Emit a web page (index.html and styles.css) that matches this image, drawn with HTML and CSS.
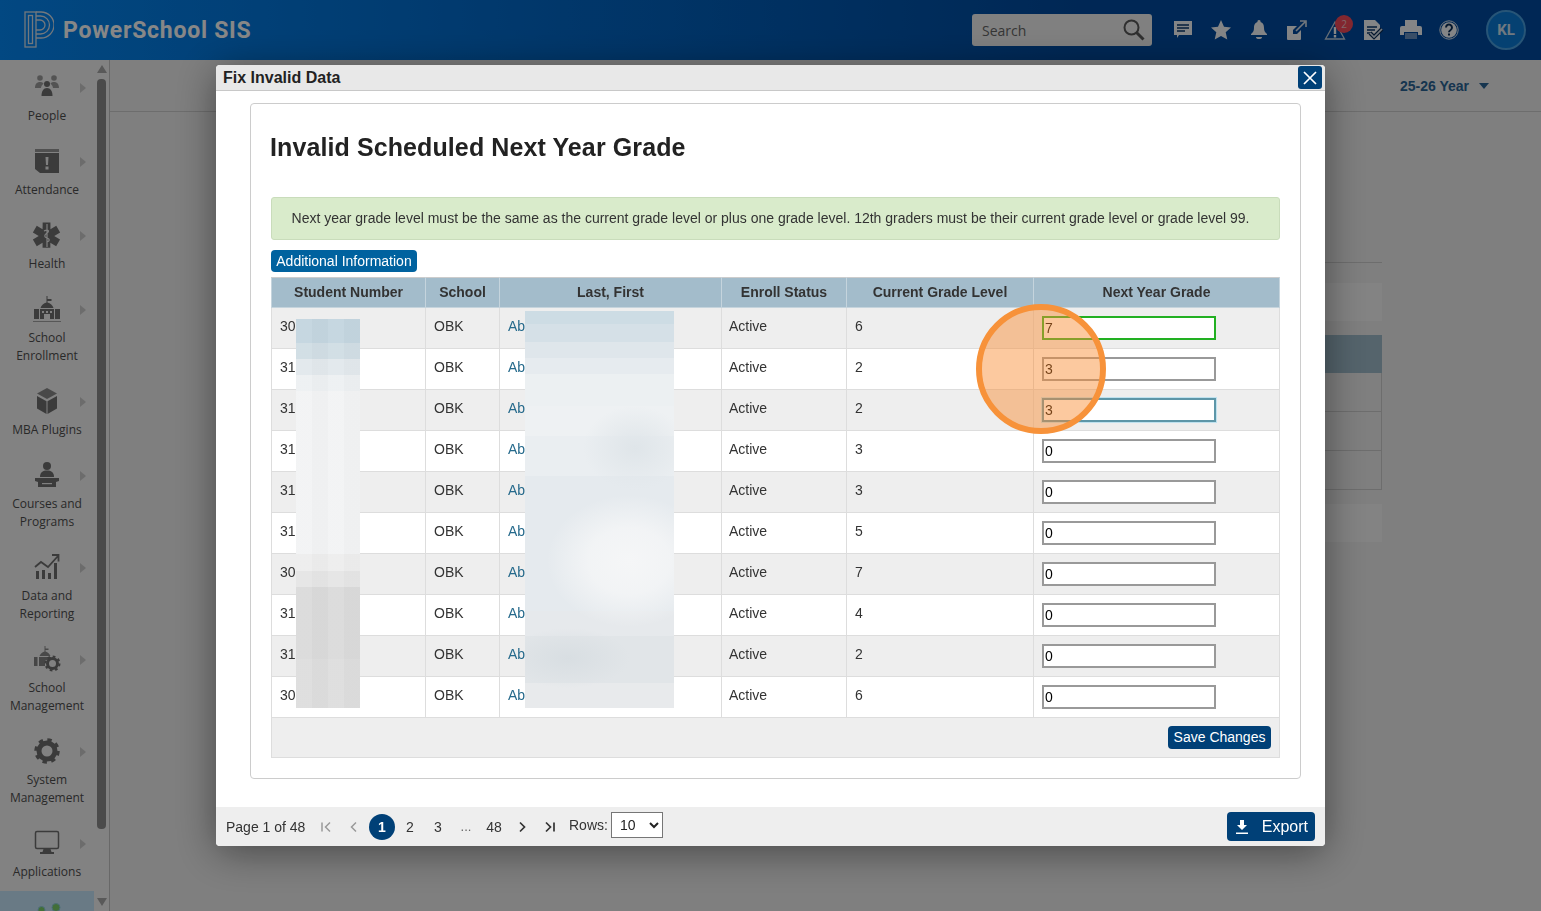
FILE: index.html
```html
<!DOCTYPE html>
<html lang="en">
<head>
<meta charset="utf-8">
<title>PowerSchool SIS - Fix Invalid Data</title>
<link rel="stylesheet" href="styles.css">
</head>
<body>
<div class="app">
  <header class="topbar">
    <div class="brand">
      <svg class="logo" width="30" height="38" viewBox="0 0 30 38" fill="none" stroke="currentColor" stroke-width="1.3">
        <rect x="1" y="1" width="11" height="35"/>
        <rect x="4.5" y="4.5" width="4" height="28"/>
        <path d="M12 1h5a13 13 0 0 1 0 26h-5"/>
        <path d="M12 5h4.500a9 9 0 0 1 0 18h-4.500"/>
        <path d="M12 9h4a5 5 0 0 1 0 10h-4"/>
      </svg>
      <span class="brand-name">PowerSchool SIS</span>
    </div>
    <div class="search">
      <span class="search-text">Search</span>
      <svg width="24" height="24" viewBox="0 0 24 24" fill="none" stroke="#5a5a5a" stroke-width="2"><circle cx="9.500" cy="9.500" r="7"/><path d="M14.500 14.500l7 7" stroke-width="3"/></svg>
    </div>
    <nav class="tools">
      <span class="tool"><svg width="20" height="20" viewBox="0 0 20 20"><path class="fill-light" d="M1 1h18v14H6l-2 3v-3H1z"/><path d="M4 5h12M4 8h12M4 11h8" stroke="#0a3a6e" stroke-width="1.500"/></svg></span>
      <span class="tool"><svg width="22" height="22" viewBox="0 0 22 22"><path class="fill-light" d="M11 1l3 6.800 7 .7-5.300 4.700 1.600 7.300L11 16.900 4.700 20.500l1.600-7.300L1 8.500l7-.7z"/></svg></span>
      <span class="tool"><svg width="20" height="22" viewBox="0 0 20 22"><path class="fill-light" d="M10 1a1.500 1.500 0 0 1 1.500 2c3 1 3.500 3.500 3.500 6 0 3 1 4.500 3 6v1H2v-1c2-1.500 3-3 3-6 0-2.500.5-5 3.500-6A1.500 1.500 0 0 1 10 1z"/><path class="fill-light" d="M7 18h6a3 2 0 0 1-6 0z"/></svg></span>
      <span class="tool"><svg width="22" height="22" viewBox="0 0 22 22"><path class="fill-light" d="M1 7h10L7 11v4h4l4-4v9a1 1 0 0 1-1 1H2a1 1 0 0 1-1-1z"/><path d="M10 12l9-9M14 2h6v6" fill="none" stroke="#d9e2ec" stroke-width="1.600"/></svg></span>
      <span class="tool tool-alert">
        <svg width="22" height="22" viewBox="0 0 22 22"><path d="M11 3L1.500 20h19z" fill="none" stroke="#c4d2e0" stroke-width="1.300"/><path class="fill-light" d="M9.800 8h2.400v7H9.800zM9.800 16h2.400v2.400H9.800z"/></svg>
        <span class="badge">2</span>
      </span>
      <span class="tool"><svg width="22" height="22" viewBox="0 0 22 22"><path class="fill-light" d="M2 1h11l5 5v15H2z"/><path d="M5 8h10M5 11h8M5 14h4" stroke="#0a3a6e" stroke-width="1.500"/><path d="M8 14l4 4 8-8" fill="none" stroke="#0a2f5a" stroke-width="4"/><path d="M8 14l4 4 8-8" fill="none" stroke="#d9e2ec" stroke-width="1.700"/></svg></span>
      <span class="tool"><svg width="22" height="20" viewBox="0 0 22 20"><path class="fill-light" d="M5 0h12v6H5z"/><path class="fill-light" d="M2 6h18a2 2 0 0 1 2 2v7h-4v-3H4v3H0V8a2 2 0 0 1 2-2z"/><path d="M5 13h12v6H5z" fill="#c4d2e0" opacity=".55"/></svg></span>
      <span class="tool"><svg width="20" height="20" viewBox="0 0 20 20"><circle cx="10" cy="10" r="9.200" fill="none" stroke="#d9e2ec" stroke-width="1"/><circle class="fill-light" cx="10" cy="10" r="7.800"/><path d="M7 7.500a3 3 0 1 1 4.600 2.500c-1 .6-1.600 1.200-1.600 2.300" fill="none" stroke="#0a2f5a" stroke-width="2"/><rect x="9" y="13.500" width="2" height="2" fill="#0a2f5a"/></svg></span>
    </nav>
    <div class="avatar">KL</div>
  </header>

  <div class="workspace">
    <aside class="sidebar">
      <ul class="menu">
        <li class="menu-item">
          <div class="menu-icon"><svg width="30" height="30" viewBox="0 0 30 30" fill="currentColor"><g opacity=".65"><circle cx="8" cy="6" r="2.800"/><circle cx="22" cy="6" r="2.800"/><path d="M3 16c0-4 2-6 5-6 1.500 0 3 .5 3.500 1.500C10 13 9 14.500 9 16zM27 16c0-4-2-6-5-6-1.500 0-3 .5-3.500 1.500 1.500 1.500 2.500 3 2.500 4.500z"/></g><circle cx="15" cy="12" r="3"/><path d="M9.500 24c0-5 2-8 5.500-8s5.500 3 5.500 8z"/></svg></div>
          <span class="menu-arrow"></span>
          <span class="menu-label">People</span>
        </li>
        <li class="menu-item">
          <div class="menu-icon"><svg width="30" height="30" viewBox="0 0 30 30" fill="currentColor"><path d="M3 3h24v3H3z" opacity=".7"/><path d="M3 7h24v20H8l-5-4z"/><path d="M13.500 11h3l-.5 8h-2zM13.500 20.500h3v3h-3z" fill="#f2f2f2"/></svg></div>
          <span class="menu-arrow"></span>
          <span class="menu-label">Attendance</span>
        </li>
        <li class="menu-item">
          <div class="menu-icon"><svg width="30" height="30" viewBox="0 0 30 30" fill="currentColor"><path d="M11 3h8v7l6-3.500 4 7-6 3.500-.1 0 6 3.500-4 7-6-3.500v5h-8v-5l-6 3.500-4-7 6-3.500-6-3.500 4-7 6 3.500z" transform="translate(0 -.5) scale(.97)"/><path d="M15 4v23M12 11c4-2 6 0 3 2s-3 4 0 5 3 3 0 4" fill="none" stroke="#f2f2f2" stroke-width="1.200"/></svg></div>
          <span class="menu-arrow"></span>
          <span class="menu-label">Health</span>
        </li>
        <li class="menu-item">
          <div class="menu-icon"><svg width="30" height="30" viewBox="0 0 30 30" fill="currentColor"><path d="M14.500 2h1v3h4v2h-4v1.500c3 .8 5 2.800 6 5.500h-13c1-2.700 3-4.700 6-5.500z"/><path d="M2 15h5v10H2zM23 15h5v10h-5z"/><path d="M8 15h14v10h-4v-5h-6v5H8z"/><path d="M10 17h2v2h-2zM14 17h2v2h-2zM18 17h2v2h-2z" fill="#f2f2f2"/><path d="M1 27h28v1H1z" opacity=".6"/></svg></div>
          <span class="menu-arrow"></span>
          <span class="menu-label">School<br>Enrollment</span>
        </li>
        <li class="menu-item">
          <div class="menu-icon"><svg width="30" height="30" viewBox="0 0 30 30" fill="currentColor"><path d="M15 2l10 5.500-10 5.500L5 7.500z" opacity=".8"/><path d="M5 10l9.500 5.200V28L5 22.500zM25 10l-9.500 5.200V28L25 22.500z"/></svg></div>
          <span class="menu-arrow"></span>
          <span class="menu-label">MBA Plugins</span>
        </li>
        <li class="menu-item">
          <div class="menu-icon"><svg width="30" height="30" viewBox="0 0 30 30" fill="currentColor"><circle cx="15" cy="6" r="4"/><path d="M8 17c0-5 3-6.500 7-6.500s7 1.500 7 6.500z"/><path d="M3 18h24v3l-3 1v5H6v-5l-3-1z"/><path d="M10 23h10v1.200H10z" fill="#f2f2f2"/></svg></div>
          <span class="menu-arrow"></span>
          <span class="menu-label">Courses and<br>Programs</span>
        </li>
        <li class="menu-item">
          <div class="menu-icon"><svg width="30" height="30" viewBox="0 0 30 30" fill="currentColor"><path d="M4 19h3v8H4zM10 18h3v9h-3zM16 21h3v6h-3zM22 11h3v16h-3z"/><path d="M3 15l6-5 7 5 10-11M20 3h6.500v6.500" fill="none" stroke="currentColor" stroke-width="1.800"/></svg></div>
          <span class="menu-arrow"></span>
          <span class="menu-label">Data and<br>Reporting</span>
        </li>
        <li class="menu-item">
          <div class="menu-icon"><svg width="30" height="30" viewBox="0 0 30 30" fill="currentColor"><path d="M12.500 2h1v2.500h3V6h-3v1.500c2.500.7 4 2.300 5 4.500H7.500c1-2.200 2.500-3.800 5-4.500z" opacity=".8"/><path d="M2 13h3.500v9H2zM7 13h12v3h-6v6H7z" opacity=".85"/><circle cx="20.500" cy="19.500" r="5" fill="none" stroke="currentColor" stroke-width="3"/><circle cx="20.500" cy="19.500" r="7" fill="none" stroke="currentColor" stroke-width="2" stroke-dasharray="2.700 2.800"/></svg></div>
          <span class="menu-arrow"></span>
          <span class="menu-label">School<br>Management</span>
        </li>
        <li class="menu-item">
          <div class="menu-icon"><svg width="30" height="30" viewBox="0 0 30 30" fill="none" stroke="currentColor"><circle cx="15" cy="15" r="8" stroke-width="5"/><circle cx="15" cy="15" r="11" stroke-width="3.500" stroke-dasharray="4.300 4.340"/></svg></div>
          <span class="menu-arrow"></span>
          <span class="menu-label">System<br>Management</span>
        </li>
        <li class="menu-item">
          <div class="menu-icon"><svg width="30" height="30" viewBox="0 0 30 30" fill="currentColor"><rect x="3.500" y="3.500" width="23" height="17" rx="1.500" fill="none" stroke="currentColor" stroke-width="1.500"/><path d="M11.500 21h7l1 3h2.500v2H8v-2h2.500z"/></svg></div>
          <span class="menu-arrow"></span>
          <span class="menu-label">Applications</span>
        </li>
        <li class="menu-item menu-item-active">
          <div class="menu-icon"><svg width="30" height="30" viewBox="0 0 30 30"><circle cx="9.500" cy="8" r="3.500" fill="#7dd16a" stroke="#8fd0e0"/><circle cx="24" cy="5.500" r="4" fill="#7dd16a" stroke="#8fd0e0"/></svg></div>
        </li>
      </ul>
      <div class="scrollbar">
        <span class="scroll-up"></span>
        <span class="scroll-thumb"></span>
        <span class="scroll-down"></span>
      </div>
    </aside>

    <main class="content">
      <div class="content-bar">
        <span class="term">25-26 Year</span>
        <span class="term-caret"></span>
      </div>
      <section class="pane">
        <div class="pane-strip"></div>
        <div class="pane-head"></div>
        <div class="pane-row"></div>
        <div class="pane-row"></div>
        <div class="pane-row"></div>
        <div class="pane-strip pane-strip-last"></div>
      </section>
    </main>
  </div>
</div>

<div class="backdrop"></div>

<div class="modal">
  <div class="modal-title">
    <span>Fix Invalid Data</span>
    <button class="modal-close" type="button" aria-label="Close"><svg width="14" height="14" viewBox="0 0 14 14" stroke="#fff" stroke-width="1.700"><path d="M1 1l12 12M13 1L1 13"/></svg></button>
  </div>
  <div class="modal-body">
    <div class="card">
      <h1 class="card-title">Invalid Scheduled Next Year Grade</h1>
      <div class="notice">Next year grade level must be the same as the current grade level or plus one grade level. 12th graders must be their current grade level or grade level 99.</div>
      <button class="btn-info" type="button">Additional Information</button>
      <div class="table-wrap">
        <table class="grid">
          <colgroup>
            <col class="col-number"><col class="col-school"><col class="col-name"><col class="col-status"><col class="col-level"><col class="col-next">
          </colgroup>
          <thead>
            <tr><th>Student Number</th><th>School</th><th>Last, First</th><th>Enroll Status</th><th>Current Grade Level</th><th>Next Year Grade</th></tr>
          </thead>
          <tbody>
            <tr><td>30</td><td>OBK</td><td><a class="link">Ab</a></td><td>Active</td><td>6</td><td><input class="grade grade-valid" value="7"></td></tr>
            <tr><td>31</td><td>OBK</td><td><a class="link">Ab</a></td><td>Active</td><td>2</td><td><input class="grade" value="3"></td></tr>
            <tr><td>31</td><td>OBK</td><td><a class="link">Ab</a></td><td>Active</td><td>2</td><td><input class="grade grade-focus" value="3"></td></tr>
            <tr><td>31</td><td>OBK</td><td><a class="link">Ab</a></td><td>Active</td><td>3</td><td><input class="grade" value="0"></td></tr>
            <tr><td>31</td><td>OBK</td><td><a class="link">Ab</a></td><td>Active</td><td>3</td><td><input class="grade" value="0"></td></tr>
            <tr><td>31</td><td>OBK</td><td><a class="link">Ab</a></td><td>Active</td><td>5</td><td><input class="grade" value="0"></td></tr>
            <tr><td>30</td><td>OBK</td><td><a class="link">Ab</a></td><td>Active</td><td>7</td><td><input class="grade" value="0"></td></tr>
            <tr><td>31</td><td>OBK</td><td><a class="link">Ab</a></td><td>Active</td><td>4</td><td><input class="grade" value="0"></td></tr>
            <tr><td>31</td><td>OBK</td><td><a class="link">Ab</a></td><td>Active</td><td>2</td><td><input class="grade" value="0"></td></tr>
            <tr><td>30</td><td>OBK</td><td><a class="link">Ab</a></td><td>Active</td><td>6</td><td><input class="grade" value="0"></td></tr>
          </tbody>
          <tfoot>
            <tr><td colspan="6"><button class="btn-save" type="button">Save Changes</button></td></tr>
          </tfoot>
        </table>
        <div class="redact redact-number"></div>
        <div class="redact redact-name"></div>
        <div class="spotlight"></div>
      </div>
    </div>
  </div>
  <div class="modal-footer">
    <span class="page-info">Page 1 of 48</span>
    <div class="pager">
      <span class="pg pg-muted"><svg width="12" height="12" viewBox="0 0 12 12" fill="none" stroke="currentColor" stroke-width="1.500"><path d="M2 1.500v9M10 1.500L5.500 6l4.500 4.500"/></svg></span>
      <span class="pg pg-muted"><svg width="12" height="12" viewBox="0 0 12 12" fill="none" stroke="currentColor" stroke-width="1.500"><path d="M8 1.500L3.500 6 8 10.500"/></svg></span>
      <span class="pg pg-current">1</span>
      <span class="pg">2</span>
      <span class="pg">3</span>
      <span class="pg pg-gap">...</span>
      <span class="pg">48</span>
      <span class="pg"><svg width="12" height="12" viewBox="0 0 12 12" fill="none" stroke="currentColor" stroke-width="1.700"><path d="M4 1.500L8.500 6 4 10.500"/></svg></span>
      <span class="pg"><svg width="12" height="12" viewBox="0 0 12 12" fill="none" stroke="currentColor" stroke-width="1.700"><path d="M2 1.500L6.500 6 2 10.500M10 1.500v9"/></svg></span>
    </div>
    <label class="rows"><span class="rows-text">Rows:</span>
      <select class="rows-select"><option>10</option><option>25</option><option>50</option></select>
    </label>
    <button class="btn-export" type="button">
      <svg width="14" height="16" viewBox="0 0 14 16" fill="#fff"><path d="M5 1h4v5h3L7 11 2 6h3z"/><path d="M1 13.500h12v1.500H1z"/></svg>
      <span>Export</span>
    </button>
  </div>
</div>
</body>
</html>
```
FILE: styles.css
```css
* { box-sizing: border-box; }
html, body { margin: 0; height: 100%; overflow: hidden; }
body { font-family: "Liberation Sans", Arial, sans-serif; font-size: 14px; color: #333; background: #f0f0f0; }

.app { height: 911px; display: flex; flex-direction: column; }

/* Top bar */
.topbar { height: 60px; flex: none; display: flex; align-items: center; padding: 0 15px 0 24px; background: linear-gradient(90deg, #0488f5, #004ba0 70%); color: #fff; }
.brand { display: flex; align-items: center; gap: 9px; flex: 1; color: #d9e2ec; }
.logo { flex: none; }
.brand-name { font-family: Roboto, "Liberation Sans", sans-serif; font-weight: 700; font-size: 23px; letter-spacing: .75px; color: #fff; }
.search { width: 180px; height: 32px; display: flex; align-items: center; justify-content: space-between; padding: 0 6px 0 10px; border-radius: 3px; background: #f2f2f2; }
.search-text { font-family: "Open Sans", sans-serif; font-size: 14px; color: #666; }
.tools { display: flex; margin-left: 12px; }
.tool { position: relative; width: 38px; height: 32px; display: flex; align-items: center; justify-content: center; }
.fill-light { fill: #fff; opacity: .98; }
.badge { position: absolute; left: 19px; top: 1px; width: 18px; height: 18px; border-radius: 50%; background: #f54a5a; color: #f2c4c8; font-family: "Open Sans", sans-serif; font-size: 10px; line-height: 18px; text-align: center; }
.avatar { width: 40px; height: 40px; margin-left: 18px; display: flex; align-items: center; justify-content: center; border-radius: 50%; border: 2px solid #4aa0e0; background: #0a7bd8; color: #d4e4f2; font-family: Roboto, sans-serif; font-weight: 700; font-size: 15px; }

/* Workspace */
.workspace { flex: 1; display: flex; min-height: 0; }
.sidebar { width: 110px; flex: none; display: flex; overflow: hidden; background: #f5f5f5; border-right: 1px solid #c4c4c4; }
.menu { width: 94px; flex: none; margin: 0; padding: 1px 0 0; list-style: none; }
.menu-item { position: relative; padding: 11px 0 10px; text-align: center; font-family: "Open Sans", sans-serif; font-size: 12px; line-height: 18px; color: #4f4f4f; }
.menu-item-active { background: #c6e6fb; }
.menu-icon { width: 30px; height: 30px; margin: 0 auto 5px; color: #707070; }
.menu-icon svg { display: block; }
.menu-arrow { position: absolute; left: 80px; top: 22px; border-left: 6px solid #cccccc; border-top: 5px solid transparent; border-bottom: 5px solid transparent; }
.menu-label { display: block; }
.scrollbar { width: 15px; flex: none; display: flex; flex-direction: column; align-items: center; padding: 5px 0; }
.scroll-up { flex: none; border-bottom: 8px solid #a8a8a8; border-left: 5px solid transparent; border-right: 5px solid transparent; }
.scroll-thumb { flex: none; width: 9px; height: 750px; margin: 6px 0 69px; border-radius: 4px; background: #8f8f8f; }
.scroll-down { flex: none; border-top: 8px solid #a8a8a8; border-left: 5px solid transparent; border-right: 5px solid transparent; }

/* Page behind the dialog */
.content { flex: 1; min-width: 0; }
.content-bar { height: 52px; display: flex; align-items: center; justify-content: flex-end; gap: 10px; padding: 0 52px 0 0; border-bottom: 1px solid #cfcfcf; }
.term { font-weight: 700; font-size: 14px; color: #2a6496; }
.term-caret { border-top: 6px solid #2a6496; border-left: 5px solid transparent; border-right: 5px solid transparent; }
.pane { margin: 150px 159px 0 150px; border-top: 1px solid #cfcfcf; padding-top: 20px; }
.pane-strip { height: 38px; background: #f8f8f8; margin-bottom: 14px; }
.pane-strip-last { margin: 14px 0 0; }
.pane-head { height: 38px; background: #a0bdcc; }
.pane-row { height: 39px; border: 1px solid #cfcfcf; border-width: 0 1px 1px 0; }

/* Dialog */
.backdrop { position: fixed; inset: 0; background: rgba(0, 0, 0, .47); }
.modal { position: fixed; left: 216px; top: 65px; width: 1109px; height: 781px; display: flex; flex-direction: column; background: #fff; border-radius: 4px; box-shadow: 0 6px 40px rgba(0, 0, 0, .45); }
.modal-title { height: 26px; flex: none; display: flex; align-items: center; justify-content: space-between; padding: 0 3px 0 7px; background: #e8e8e8; border-bottom: 1px solid #c8c8c8; border-radius: 4px 4px 0 0; font-weight: 700; font-size: 16px; color: #222; }
.modal-close { width: 24px; height: 23px; display: flex; align-items: center; justify-content: center; padding: 0; border: 0; border-radius: 3px; background: #004077; }
.modal-body { flex: 1; min-height: 0; padding: 12px 24px 28px 34px; }
.card { height: 100%; padding: 0 20px; border: 1px solid #ccc; border-radius: 4px; }
.card-title { margin: 27px 0 34px -1px; font-size: 25px; line-height: 32px; font-weight: 700; letter-spacing: .1px; color: #222; }
.notice { height: 43px; display: flex; align-items: center; justify-content: center; margin-bottom: 10px; padding: 0 10px 2px 0; background: #d9ebcb; border: 1px solid #c9dcbb; border-radius: 3px; color: #333; }
.btn-info { display: block; width: 146px; height: 22px; padding: 0; border: 0; border-radius: 4px; background: #00629f; color: #fff; font-family: inherit; font-size: 14px; }

.table-wrap { position: relative; margin-top: 5px; }
.grid { width: 1008px; border-collapse: collapse; table-layout: fixed; }
.col-number { width: 154px; }
.col-school { width: 74px; }
.col-name { width: 222px; }
.col-status { width: 125px; }
.col-level { width: 187px; }
.col-next { width: 246px; }
.grid th { height: 30px; padding: 0 0 2px; background: #a3bccb; border: 1px solid #c5d4dd; border-top-color: #ccc; font-size: 14px; font-weight: 700; color: #333; }
.grid td { height: 41px; padding: 8px 8px 0; vertical-align: top; line-height: 20px; border: 1px solid #ddd; color: #333; }
.grid tbody td:nth-child(4) { padding-left: 7px; }
.grid tbody tr:nth-child(odd) td { background: #eee; }
.grid tfoot td { height: 40px; padding: 8px 8px 0; text-align: right; background: #eee; }
.link { color: #266a8c; }
.grade { display: block; width: 174px; height: 24px; padding: 0 1px; border: 2px solid #999; background: #fff; font-family: inherit; font-size: 14px; color: #000; outline: 0; }
.grade-valid { border-color: #22b022; }
.grade-focus { border-color: #5d96a8; box-shadow: 0 0 0 1px #bfe2ef; }
.btn-save { width: 103px; height: 23px; padding: 0 0 2px; border: 0; border-radius: 4px; background: #004077; color: #fff; font-family: inherit; font-size: 14px; }

.redact { position: absolute; }
.redact-number { left: 25px; top: 42px; width: 64px; height: 389px; background: repeating-linear-gradient(90deg, rgba(255, 255, 255, .05) 0 16px, rgba(0, 0, 0, .012) 16px 32px), linear-gradient(180deg, #c3d5df 0 24px, #d0dde4 24px 40px, #e2e8ec 40px 56px, #edf0f2 56px 72px, #f2f3f4 72px 235px, #ededed 235px 252px, #e5e5e5 252px 268px, #dadada 268px 340px, #dddddd 340px 389px); }
.redact-name { left: 254px; top: 34px; width: 149px; height: 397px; background: radial-gradient(ellipse 82px 66px at 104px 250px, #f5f6f7 0, rgba(245, 246, 247, .8) 50%, rgba(245, 246, 247, 0) 100%), radial-gradient(ellipse 52px 42px at 110px 137px, #dfe5e9 0, rgba(223, 229, 233, 0) 100%), radial-gradient(ellipse 62px 30px at 43px 347px, #d8dee2 0, rgba(216, 222, 226, 0) 100%), linear-gradient(180deg, #cddce4 0 13px, #d5e0e7 13px 31px, #dfe6eb 31px 47px, #e6ebef 47px 63px, #ecf0f2 63px 95px, #eef1f3 95px 125px, #eaeef1 125px 165px, #e5eaee 165px 300px, #e6e9ec 300px 325px, #e1e5e8 325px 372px, #e8eaec 372px 397px); }
.spotlight { position: absolute; left: 705px; top: 27px; width: 130px; height: 130px; border: 6px solid #f7923a; border-radius: 50%; background: rgba(249, 140, 50, .47); }

.modal-footer { height: 39px; flex: none; display: flex; align-items: center; padding: 0 10px; background: #eee; border-radius: 0 0 4px 4px; }
.page-info { width: 86px; color: #333; padding-top: 1px; }
.pager { display: flex; align-items: center; padding-top: 1px; }
.pg { width: 28px; height: 26px; display: flex; align-items: center; justify-content: center; color: #333; }
.pg-muted { color: #999; }
.pg-current { width: 26px; margin: 0 1px; border-radius: 50%; background: #004077; color: #fff; font-weight: 700; }
.pg-gap { align-items: flex-end; padding-bottom: 6px; font-size: 13px; color: #666; }
.rows { display: flex; align-items: center; gap: 3px; margin: 0 0 3px 5px; color: #333; flex: 1; }
.rows-select { width: 52px; height: 26px; padding-left: 4px; border: 1px solid #767676; background: #fff; font-family: inherit; font-size: 14px; color: #222; }
.btn-export { width: 88px; height: 29px; display: flex; align-items: center; justify-content: space-between; padding: 0 7px 0 8px; border: 0; border-radius: 4px; background: #004077; color: #fff; font-family: inherit; font-size: 16px; }
```
